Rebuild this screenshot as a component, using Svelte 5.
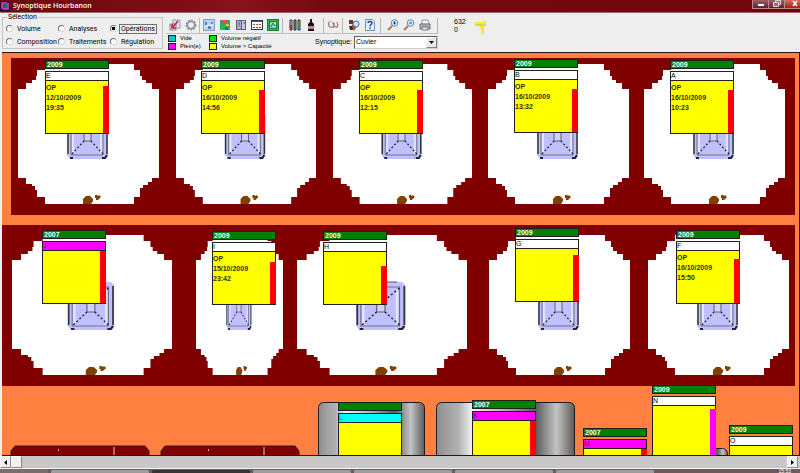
<script>
    let selection = "operations";
    let synoptique = "Cuvier";

    const modes = [
        { id: "volume", label: "Volume" },
        { id: "analyses", label: "Analyses" },
        { id: "operations", label: "Opérations" },
        { id: "composition", label: "Composition" },
        { id: "traitements", label: "Traitements" },
        { id: "regulation", label: "Régulation" },
    ];

    const legend = [
        { label: "Vide", color: "#00c8c8" },
        { label: "Volume négatif", color: "#00e800" },
        { label: "Plein(e)", color: "#ff00ff" },
        { label: "Volume > Capacité", color: "#ffff00" },
    ];

    const toolGroups = [
        ["export", "settings"],
        ["plan", "picture", "copy", "table", "map"],
        ["tubes", "bottle"],
        ["link"],
        ["find", "help"],
        ["zoomin", "zoomout", "print"],
    ];

    const toolNames = {
        export: "Exporter",
        settings: "Paramètres",
        plan: "Plan",
        picture: "Image",
        copy: "Copier",
        table: "Tableau",
        map: "Carte",
        tubes: "Analyses",
        bottle: "Bouteille",
        link: "Lien",
        find: "Rechercher",
        help: "Aide",
        zoomin: "Zoom avant",
        zoomout: "Zoom arrière",
        print: "Imprimer",
    };

    // concrete vats seen from above, in canvas coordinates
    const vats = [
        { x: 16, y: 11, w: 141 },
        { x: 174, y: 11, w: 140 },
        { x: 331, y: 11, w: 139 },
        { x: 486, y: 11, w: 141 },
        { x: 642, y: 11, w: 141 },
        { x: 10, y: 182, w: 160 },
        { x: 194, y: 182, w: 87 },
        { x: 295, y: 182, w: 170 },
        { x: 487, y: 182, w: 141 },
        { x: 646, y: 182, w: 141 },
    ];

    const lids = [9, 159];

    const steelTanks = [
        { x: 316, y: 349, w: 106 },
        { x: 434, y: 349, w: 138 },
        { x: 690, y: 395, w: 35 },
    ];

    const cards = [
        { name: "E", year: "2009", x: 43, y: 7, level: 47, lines: ["OP", "12/10/2009", "19:35"] },
        { name: "D", year: "2009", x: 199, y: 7, level: 43, lines: ["OP", "16/10/2009", "14:56"] },
        { name: "C", year: "2009", x: 357, y: 7, level: 43, lines: ["OP", "16/10/2009", "12:15"] },
        { name: "B", year: "2009", x: 512, y: 6, level: 43, lines: ["OP", "16/10/2009", "13:32"] },
        { name: "A", year: "2009", x: 668, y: 7, level: 43, lines: ["OP", "16/10/2009", "10:23"] },
        { name: "J", year: "2007", x: 40, y: 177, level: 52, state: "full" },
        { name: "I", year: "2009", x: 210, y: 178, level: 42, lines: ["OP", "15/10/2009", "23:42"] },
        { name: "H", year: "2009", x: 321, y: 178, level: 38 },
        { name: "G", year: "2009", x: 513, y: 175, level: 46 },
        { name: "F", year: "2009", x: 674, y: 177, level: 44, lines: ["OP", "16/10/2009", "15:50"] },
        { name: "L", year: "", x: 336, y: 349, level: 0, state: "empty" },
        { name: "K", year: "2007", x: 470, y: 347, level: 52, state: "full" },
        { name: "M", year: "2007", x: 581, y: 375, level: 52, state: "full" },
        { name: "N", year: "2009", x: 650, y: 332, level: 49, bar: "#ff00ff" },
        { name: "O", year: "2009", x: 727, y: 372, level: 0 },
    ];
</script>

<div class="window">
    <header class="titlebar">
        <svg class="app-icon" viewBox="0 0 10 10">
            <rect width="10" height="10" fill="#1c0a20" />
            <path d="M1 1h6v2H3v5H1z" fill="#c030c0" />
            <path d="M9 2v7H3V7h4V2z" fill="#c030c0" />
            <rect x="3" y="3" width="4" height="4" fill="#108030" />
        </svg>
        <h1>Synoptique Hourbanon</h1>
        <div class="window-buttons">
            <button aria-label="Réduire">
                <svg width="8" height="8" viewBox="0 0 8 8"><rect x="1" y="4" width="6" height="2" fill="#fff" /></svg>
            </button>
            <button aria-label="Restaurer">
                <svg width="8" height="8" viewBox="0 0 8 8"
                    ><path d="M2.5 2V.5h5v4H6M.5 2.5h5v4h-5z" fill="#9b6870" stroke="#e4d8da" /></svg
                >
            </button>
            <button class="close" aria-label="Fermer">
                <svg width="8" height="8" viewBox="0 0 8 8"
                    ><path d="M2 1l4 5M6 1l-4 5" stroke="#fff" stroke-width="1.5" /></svg
                >
            </button>
        </div>
    </header>

    <div class="toolbar">
        <fieldset>
            <legend>Sélection</legend>
            {#each modes as mode}
                <label>
                    <input type="radio" name="mode" value={mode.id} bind:group={selection} />
                    <span class:focused={selection === mode.id}>{mode.label}</span>
                </label>
            {/each}
        </fieldset>

        <div class="tools">
            <div class="tool-row">
                {#each toolGroups as group}
                    <div class="tool-group">
                        {#each group as tool}
                            <button class="tool" aria-label={toolNames[tool]}>
                                <svg width="12" height="12" viewBox="0 0 12 12" fill="none">
                                    {#if tool === "export"}
                                        <path d="M4 1h7v8H4z" fill="#dfe6f2" stroke="#8b9bb5" />
                                        <path d="M1 5h6v6H1z" fill="#f1e9ed" stroke="#8c7c90" />
                                        <path d="M9 2L4 8M3 5v4h4" stroke="#b02848" stroke-width="1.6" />
                                    {:else if tool === "settings"}
                                        <circle cx="6" cy="6" r="4.6" stroke="#8d90a4" stroke-width="1.6" stroke-dasharray="2 1" />
                                        <circle cx="6" cy="6" r="3.6" stroke="#9598ad" stroke-width="1.8" />
                                    {:else if tool === "plan"}
                                        <rect x=".5" y=".5" width="11" height="11" fill="#b9d2f4" stroke="#7d9ccc" />
                                        <path d="M2 3h2v3H2zM8 3h2v2H8zM5 7h3v3H5z" fill="#5880c0" />
                                        <path d="M1 9l4-3 3 1 3-3" stroke="#fff" />
                                    {:else if tool === "picture"}
                                        <rect x="1" y="1" width="10" height="10" fill="#2aa092" />
                                        <path d="M3 1h5v4H3z" fill="#e05838" />
                                        <path d="M1 7l4-2 6 3v3H1z" fill="#28b850" />
                                        <path d="M7 5h3v2H7z" fill="#f2ca30" />
                                        <path d="M6 8h3v3H6z" fill="#2868c8" />
                                    {:else if tool === "copy"}
                                        <rect x="1.5" y="1.5" width="5" height="9" fill="#a9aec6" stroke="#5b6080" />
                                        <rect x="6.5" y="1.5" width="4" height="9" fill="#c8cbe0" stroke="#5b6080" />
                                        <path d="M3 4h2M3 6h2M8 4h2" stroke="#5b6080" />
                                    {:else if tool === "table"}
                                        <rect x=".5" y="1.5" width="11" height="9" fill="#fff" stroke="#303050" />
                                        <path d="M1 2.5h10" stroke="#3858a8" />
                                        <path d="M2 5.5h8" stroke="#c85030" stroke-dasharray="2 1" />
                                        <path d="M2 8.5h8" stroke="#404848" stroke-dasharray="2 1" />
                                    {:else if tool === "map"}
                                        <rect x=".5" y=".5" width="11" height="11" fill="#30b858" stroke="#207840" />
                                        <rect x="2.5" y="2.5" width="7" height="7" fill="#88d8b0" stroke="#187848" />
                                        <path d="M4 8l2-4 2 3" stroke="#286890" />
                                        <path d="M7 4h2" stroke="#e8e850" stroke-width="2" />
                                    {:else if tool === "tubes"}
                                        <path d="M1 1h2v10H1z" fill="#c8d4e0" stroke="#283038" />
                                        <path d="M5 1h2v10H5z" fill="#38b050" stroke="#283038" />
                                        <path d="M9 1h2v10H9z" fill="#d8b030" stroke="#283038" />
                                        <path d="M1 6h2v5H1z" fill="#b02838" />
                                        <path d="M9 7h2v3H9z" fill="#3080c0" />
                                    {:else if tool === "bottle"}
                                        <path d="M5 0h2v3l2 2v7H3V5l2-2z" fill="#240c18" />
                                        <rect x="3" y="7" width="6" height="3" fill="#b88890" />
                                    {:else if tool === "link"}
                                        <path d="M2 3c-2 5 4 7 5 4V4M6 3c0 7 7 6 4 1" stroke="#9a8878" stroke-width="1.4" />
                                        <path d="M2 3l2-1M9 3l2 1" stroke="#d0c0a0" stroke-width="1.5" />
                                    {:else if tool === "find"}
                                        <path d="M1 1h4v4H1z" fill="#783020" />
                                        <path d="M1 7h4v4H2z" fill="#303030" />
                                        <path d="M4 6l3 3-2 2" stroke="#a85838" stroke-width="2" />
                                        <circle cx="8" cy="5" r="3" fill="#cfe4fa" stroke="#3868a8" />
                                    {:else if tool === "help"}
                                        <path d="M1.5.5h7l2 2v9h-9z" fill="#e7f1fc" stroke="#6890c0" />
                                        <path d="M4 4c0-2 4-2 4 0 0 1.5-2 1.5-2 3.5M6 8.5V10" stroke="#1850a0" stroke-width="1.5" />
                                    {:else if tool === "print"}
                                        <path d="M3 1h6l1 4H3z" fill="#fff" stroke="#9098a0" />
                                        <path d="M1 5h10v5H1z" fill="#a8aeb4" stroke="#707880" />
                                        <path d="M3 8h6v3H3z" fill="#dfe4e8" stroke="#707880" />
                                    {:else}
                                        <path d="M1 11l4-4" stroke="#a87848" stroke-width="2" />
                                        <circle cx="7.5" cy="4" r="3.3" fill="#d6e9fb" stroke="#6088b8" />
                                        <path d="M6 4h3" stroke="#284878" />
                                        {#if tool === "zoomin"}
                                            <path d="M7.5 2.5v3" stroke="#284878" />
                                        {/if}
                                    {/if}
                                </svg>
                            </button>
                        {/each}
                    </div>
                {/each}
            </div>
            <div class="info-row">
                <ul class="legend">
                    {#each legend as item}
                        <li><i style:background={item.color}></i>{item.label}</li>
                    {/each}
                </ul>
                <div class="picker">
                    <label for="synoptique">Synoptique:</label>
                    <span class="select-box">
                        <select id="synoptique" bind:value={synoptique}>
                            <option>Cuvier</option>
                        </select>
                        <svg viewBox="0 0 9 9"><path d="M2 3h5L4.5 6z" /></svg>
                    </span>
                </div>
            </div>
        </div>

        <div class="counter">
            <span>632</span>
            <span>0</span>
        </div>
        <svg class="marker" width="12" height="14" viewBox="0 0 12 14">
            <path d="M0 2h9V0l3 3-3 2H0z" fill="#f4ee20" />
            <path d="M5 5h4v9H6V8H4z" fill="#f4ee20" />
            <path d="M0 5h11" stroke="#b8b490" />
        </svg>
    </div>

    <main class="canvas">
        <svg class="scene" width="798" height="402" viewBox="0 0 798 402">
            <defs>
                <linearGradient id="steel">
                    <stop offset="0" stop-color="#8c8c8c" />
                    <stop offset="0.08" stop-color="#a2a2a2" />
                    <stop offset="0.16" stop-color="#b0b0b0" />
                    <stop offset="0.26" stop-color="#f4f4f4" />
                    <stop offset="0.5" stop-color="#b0b0b0" />
                    <stop offset="0.72" stop-color="#5c5c5c" />
                    <stop offset="0.87" stop-color="#c4c4c4" />
                    <stop offset="1" stop-color="#5a5a5a" />
                </linearGradient>
                <symbol id="vat" viewBox="0 0 141 140" preserveAspectRatio="none">
                    <path
                        d="M27 0H116V6H122V12H124V16H128V19H134V25H141V114H134V118H130V121H125V124H122V133H116V140H27V133H19V126H17V122H14V120H8V114H0V25H8V19H14V16H18V12H19V6H27Z"
                        fill="#fff"
                    />
                    <path d="M51 47H87L90 50V92L88 95H52L49 91V50Z" fill="#c0c0ff" />
                    <path d="M53 52H85V91H53Z" fill="none" stroke="#707084" />
                    <path d="M55 54V90M83 54V90" stroke="#e4e4fa" stroke-width="2" />
                    <path d="M50 51V90M89 51V90" stroke="#34343c" stroke-width="1.5" />
                    <path d="M54 47H83" stroke="#505060" />
                    <path d="M66 65H73V77H66Z" fill="#d0d0f8" stroke="#606070" />
                    <path d="M54 90L66 77M85 90L73 77M54 53L66 65M85 53L73 65" stroke="#202040" stroke-width="1.3" stroke-dasharray="2 2" />
                    <path d="M52 94H55M84 94H87L89 91" stroke="#202040" stroke-width="2" fill="none" />
                    <path d="M65 140V135L68 132H72L75 135V137L73 140Z" fill="#804000" />
                    <path d="M77 131H79L80 132L81 131L83 133L80 136H78V134H77Z" fill="#804000" />
                </symbol>
            </defs>

            <rect x="9" y="5" width="784" height="157" fill="#800000" />
            <rect x="0" y="172" width="793" height="161" fill="#800000" />

            {#each vats as vat}
                <use href="#vat" x={vat.x} y={vat.y} width={vat.w} height="140" />
            {/each}

            {#each lids as x}
                <path d="M{x} 410V398L{x + 4} 393H{x + 134}L{x + 138} 398V410Z" fill="#800000" stroke="#401008" />
                <path d="M{x + 103} 394v8" stroke="#e8c8c8" />
                <rect x={x + 47} y="396" width="1" height="2" fill="#e0a0a0" />
            {/each}

            {#each steelTanks as tank}
                <rect x={tank.x + 0.5} y={tank.y + 0.5} width={tank.w} height="80" rx="5" fill="url(#steel)" stroke="#201c1c" />
            {/each}
        </svg>

        {#each cards as card}
            <article class="card {card.state ?? ''}" style:left="{card.x}px" style:top="{card.y}px">
                <div class="year">{card.year}</div>
                <div class="name">{card.name}</div>
                <div class="body">
                    <div class="lines">
                        {#each card.lines ?? [] as line}
                            <div>{line}</div>
                        {/each}
                    </div>
                    <div class="level" style:height="{card.level}px" style:background={card.bar ?? "#ff0000"}></div>
                </div>
            </article>
        {/each}
    </main>

    <div class="scrollbar">
        <button aria-label="Défiler à gauche">
            <svg width="5" height="7" viewBox="0 0 5 7"><path d="M4 1v5L1 3.5z" /></svg>
        </button>
        <div class="thumb"></div>
        <button class="right" aria-label="Défiler à droite">
            <svg width="5" height="7" viewBox="0 0 5 7"><path d="M1 1v5l3-2.5z" /></svg>
        </button>
    </div>

    <footer class="taskbar">
        <div class="start"></div>
        <div class="task"></div>
        <div class="task active"></div>
        <div class="task"></div>
        <div class="task"></div>
        <div class="task"></div>
        <div class="task"></div>
        <time>15:53</time>
    </footer>
</div>

<style>
    :global(body) {
        margin: 0;
        overflow: hidden;
    }

    .window {
        display: flex;
        flex-direction: column;
        height: 100vh;
        background: #eeeeee;
        font-family: "Liberation Sans", Arial, sans-serif;
        font-size: 7px;
        line-height: 8px;
        color: #000;
    }

    button {
        display: flex;
        align-items: center;
        justify-content: center;
        margin: 0;
        padding: 0;
        border: 0;
        background: none;
    }

    .titlebar {
        display: flex;
        align-items: center;
        gap: 3px;
        height: 12px;
        border-bottom: 1px solid #a86468;
        background: linear-gradient(100deg, #6a0a10, #7c0c14 20%, #86141a 30%, #74080e 42%, #70060c);
    }

    .app-icon {
        width: 10px;
        height: 10px;
    }

    h1 {
        flex: 1;
        margin: 0;
        font-family: "Open Sans", sans-serif;
        font-size: 7px;
        font-weight: 600;
        line-height: 12px;
        color: #fff;
    }

    .window-buttons {
        display: flex;
        align-self: flex-start;
    }

    .window-buttons button {
        width: 16px;
        height: 9px;
        border-left: 1px solid #c08a8c;
        border-bottom: 1px solid #c08a8c;
        background: linear-gradient(#a06068, #5c2030);
    }

    .window-buttons .close {
        justify-content: flex-end;
        padding-right: 1px;
        background: linear-gradient(#d07060, #a82010);
    }

    .toolbar {
        display: flex;
        align-items: flex-start;
        height: 39px;
        padding-left: 2px;
    }

    fieldset {
        display: grid;
        grid-template-columns: repeat(3, 52px);
        grid-auto-rows: 13px;
        box-sizing: border-box;
        width: 160px;
        height: 36px;
        margin: 0;
        padding: 1px 0 0 3px;
        border: 1px solid #c4c4c4;
        font-family: Roboto, sans-serif;
    }

    legend {
        margin-left: 1px;
        padding: 0 1px;
    }

    fieldset label {
        display: flex;
        align-items: center;
        gap: 2px;
        white-space: nowrap;
    }

    fieldset span {
        padding: 0 1px;
        border: 1px solid transparent;
    }

    fieldset .focused {
        border: 1px solid #707070;
    }

    input[type="radio"] {
        appearance: none;
        flex: none;
        width: 7px;
        height: 7px;
        margin: 0;
        border: 1px solid;
        border-color: #707070 #d8d8d8 #d8d8d8 #707070;
        border-radius: 50%;
        background: #fff;
    }

    input[type="radio"]:checked {
        background: radial-gradient(circle, #000 40%, #fff 55%);
    }

    .tools {
        width: 272px;
        margin-left: 3px;
        padding-top: 5px;
    }

    .tool-row {
        display: grid;
        grid-template-columns: 33fr 83fr 41fr 19fr 38fr 57fr;
        border-right: 1px solid #b4b4b4;
        border-bottom: 1px solid #c0c0c0;
    }

    .tool-group {
        display: flex;
        justify-content: center;
        gap: 4px;
        padding: 1px 0 2px;
    }

    .tool-group + .tool-group {
        border-left: 1px solid #b8b8b8;
    }

    .info-row {
        display: flex;
        align-items: center;
        justify-content: space-between;
    }

    .legend {
        display: grid;
        grid-template-columns: 41px auto;
        grid-auto-rows: 8px;
        margin: 0;
        padding: 0 0 0 2px;
        list-style: none;
        font-size: 6px;
        white-space: nowrap;
    }

    .legend li {
        display: flex;
        align-items: center;
        gap: 4px;
    }

    .legend i {
        width: 6px;
        height: 5px;
        border: 1px solid #202020;
    }

    .picker {
        display: flex;
        align-items: center;
        gap: 2px;
    }

    .select-box {
        position: relative;
    }

    select {
        appearance: none;
        display: block;
        width: 84px;
        height: 13px;
        padding: 0 12px 0 1px;
        border: 1px solid;
        border-color: #606060 #d0d0d0 #d0d0d0 #606060;
        border-radius: 0;
        background: #fff;
        font: inherit;
        color: inherit;
    }

    .select-box svg {
        position: absolute;
        top: 1px;
        right: 1px;
        width: 9px;
        height: 9px;
        border: 1px solid;
        border-color: #fff #808080 #808080 #fff;
        background: #e8e8e8;
        pointer-events: none;
    }

    .counter {
        display: flex;
        flex-direction: column;
        width: 21px;
        margin-left: 16px;
        padding-top: 5px;
        line-height: 8px;
    }

    .marker {
        margin-top: 7px;
    }

    .canvas {
        position: relative;
        flex: 1;
        min-height: 0;
        margin-left: 2px;
        border: solid #301010;
        border-width: 1px 1px 1px 0;
        background: #ff8040;
        overflow: hidden;
    }

    .scene {
        display: block;
    }

    .card {
        position: absolute;
        width: 64px;
    }

    .year,
    .name,
    .body {
        box-sizing: border-box;
        border: 1px solid #202020;
    }

    .year {
        height: 9px;
        padding-left: 1px;
        background: #008000;
        font-weight: bold;
        color: #fff;
    }

    .name {
        height: 10px;
        margin-top: 2px;
        background: #fff;
    }

    .full .name {
        background: #ff00ff;
        color: #700070;
    }

    .empty .name {
        background: #00ffff;
        color: #007070;
    }

    .body {
        display: flex;
        align-items: flex-end;
        height: 54px;
        margin-top: -1px;
        background: linear-gradient(#ffff00, #ffff00);
    }

    .lines {
        flex: 1;
        align-self: flex-start;
        padding-top: 2px;
        font-weight: bold;
        line-height: 10px;
        color: #303000;
    }

    .level {
        width: 6px;
        margin-right: -1px;
    }

    .scrollbar {
        display: flex;
        height: 12px;
        padding-right: 2px;
        border-bottom: 1px solid #f4f4f4;
        background: #c8c8c8;
    }

    .scrollbar button,
    .thumb {
        box-sizing: border-box;
        width: 11px;
        border: 1px solid;
        border-color: #fff #888 #888 #fff;
        background: #f0f0f0;
    }

    .scrollbar .right {
        margin-left: auto;
    }

    .taskbar {
        display: flex;
        gap: 3px;
        height: 4px;
        background: #6e5a5c;
    }

    .start {
        width: 48px;
        background: #7c6c6e;
    }

    .task {
        flex: 0 1 98px;
        border-top: 1px solid #6a6264;
        border-radius: 2px 2px 0 0;
        background: #a09c9c;
    }

    .active {
        background: #383434;
    }

    time {
        margin-left: auto;
        padding-right: 9px;
        font-size: 5px;
        line-height: 4px;
        color: #fff;
    }
</style>
